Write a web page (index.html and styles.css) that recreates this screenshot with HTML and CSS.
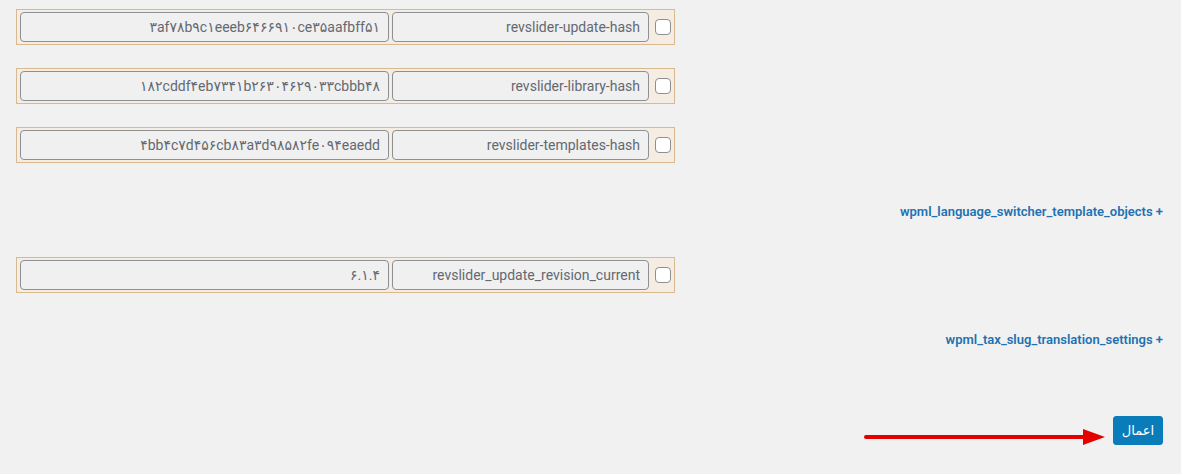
FILE: index.html
```html
<!DOCTYPE html>
<html>
<head>
  <meta charset="utf-8">
  <title>تنظیمات</title>
  <link rel="stylesheet" href="styles.css">
</head>
<body>

  <div class="options">

    <div class="option-row">
      <input type="text" class="opt-value" value="۳af۷۸b۹c۱eeeb۶۴۶۶۹۱۰ce۳۵aafbff۵۱">
      <input type="text" class="opt-name" value="revslider-update-hash">
      <input type="checkbox" class="opt-check">
    </div>

    <div class="option-row">
      <input type="text" class="opt-value" value="۱۸۲cddf۴eb۷۳۴۱b۲۶۳۰۴۶۲۹۰۳۳cbbb۴۸">
      <input type="text" class="opt-name" value="revslider-library-hash">
      <input type="checkbox" class="opt-check">
    </div>

    <div class="option-row">
      <input type="text" class="opt-value" value="۴bb۴c۷d۴۵۶cb۸۳a۳d۹۸۵۸۲fe۰۹۴eaedd">
      <input type="text" class="opt-name" value="revslider-templates-hash">
      <input type="checkbox" class="opt-check">
    </div>

    <div class="group-link first"><a href="#">wpml_language_switcher_template_objects +</a></div>

    <div class="option-row">
      <input type="text" class="opt-value" value="۶.۱.۴">
      <input type="text" class="opt-name" value="revslider_update_revision_current">
      <input type="checkbox" class="opt-check">
    </div>

    <div class="group-link second"><a href="#">wpml_tax_slug_translation_settings +</a></div>

    <div class="actions">
      <svg class="arrow" width="242" height="20" viewBox="0 0 242 20">
        <line x1="3" y1="10" x2="222" y2="10" stroke="#e50000" stroke-width="4" stroke-linecap="round" />
        <polygon points="220,2 242,10 220,18" fill="#e50000" />
      </svg>
      <button class="apply">اعمال</button>
    </div>

  </div>

</body>
</html>
```

FILE: styles.css
```css
body {
  margin: 0;
  background: #f1f1f1;
  font-family: Roboto, "DejaVu Sans", sans-serif;
}

.options {
  padding: 9px 18px 20px 16px;
}

.option-row {
  display: flex;
  align-items: center;
  width: 651px;
  height: 30px;
  padding: 2px 3px 2px 3px;
  margin-bottom: 23px;
  background: #f5ede2;
  border: 1px solid #d9b991;
}

.option-row input[type="text"] {
  box-sizing: border-box;
  height: 30px;
  padding: 0 8px;
  margin: 0;
  direction: rtl;
  text-align: right;
  font-family: Roboto, "DejaVu Sans", sans-serif;
  font-size: 14px;
  color: #646970;
  background: #f0f0f0;
  border: 1px solid #8c8f94;
  border-radius: 4px;
  outline: none;
}

.opt-value {
  width: 369px;
}

.opt-name {
  width: 257px;
  margin-left: 3px !important;
}

.opt-check {
  appearance: none;
  -webkit-appearance: none;
  box-sizing: border-box;
  width: 16px;
  height: 16px;
  margin: 0 0 0 6px;
  background: #fff;
  border: 1px solid #8c8f94;
  border-radius: 4px;
}

.group-link {
  text-align: right;
  font-size: 13px;
  font-weight: 600;
  line-height: 20px;
}

.group-link.first {
  margin-top: 39px;
  margin-bottom: 35px;
}

.group-link.second {
  margin-top: 37px;
}

.group-link a {
  color: #2271b1;
  text-decoration: none;
}

.actions {
  display: flex;
  justify-content: flex-end;
  align-items: flex-start;
  margin-top: 66px;
}

.arrow {
  margin-top: 11px;
  margin-right: 8px;
}

.apply {
  width: 50px;
  height: 29px;
  padding: 0;
  font-family: "DejaVu Sans", sans-serif;
  font-size: 13px;
  color: #fff;
  background: #0a7cba;
  border: 1px solid #0a7cba;
  border-radius: 3px;
  cursor: pointer;
}
```
